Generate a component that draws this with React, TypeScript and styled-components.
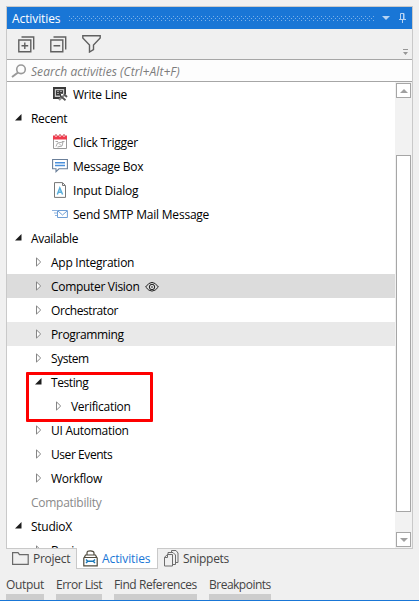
import React from 'react';
import styled, { createGlobalStyle } from 'styled-components';

const Global = createGlobalStyle`
  * { box-sizing: border-box; }
  body { margin: 0; background: #f0f0f0; font: 12px "Open Sans", "Noto Sans", sans-serif; color: #000; overflow: hidden; }
  svg { display: block; flex: none; }
`;

const Page = styled.div`
  width: 419px; height: 601px; display: flex; flex-direction: column;
  padding: 6px 5px 0 6px; background: #f0f0f0; border-bottom: 1px solid #1976d6;
`;
const Panel = styled.section`
  height: 543px; width: 407px; flex: none; display: flex; flex-direction: column;
  border: 1px solid #c9c9c9; background: #f0f0f0;
`;
const TitleBar = styled.header`
  height: 22px; flex: none; display: flex; align-items: center; background: #1976d6; color: #fff; padding: 0 6px 0 5px;
`;
const Grip = styled.div`
  width: 306px; height: 5px; margin: 1px 7px 0 auto;
  background-image: linear-gradient(90deg, #7db1e9 1px, transparent 1px), linear-gradient(90deg, #7db1e9 1px, transparent 1px), linear-gradient(90deg, #7db1e9 1px, transparent 1px);
  background-size: 4px 1px;
  background-position: 0 0, 2px 2px, 0 4px;
  background-repeat: repeat-x;
`;
const TitleActions = styled.div`display: flex; align-items: center; gap: 9px;`;
const Toolbar = styled.div`
  height: 31px; flex: none; display: flex; align-items: center; gap: 15px; padding: 0 4px 0 11px; border-bottom: 1px solid #a6a6a6;
`;
const Overflow = styled.div`margin-left: auto; align-self: flex-end; padding-bottom: 4px;`;
const Search = styled.div`
  height: 22px; flex: none; display: flex; align-items: center; gap: 4px; padding-left: 4px;
  background: #fdfdfd; border-bottom: 1px solid #a6a6a6; color: #7c7c7c; font-style: italic;
`;
const Content = styled.div`flex: 1; min-height: 0; display: flex; background: #fff;`;
const List = styled.div`flex: 1; overflow: hidden; position: relative;`;
const Row = styled.div<{ $indent: number; $bg?: string; $muted?: boolean }>`
  height: 24px; display: flex; align-items: center; padding-left: ${p => p.$indent}px;
  background: ${p => p.$bg || 'transparent'}; color: ${p => (p.$muted ? '#8a8a8a' : '#000')};
`;
const Slot = styled.span<{ $w: number; $lift?: boolean }>`
  width: ${p => p.$w}px; flex: none; display: flex; align-items: center; padding-bottom: ${p => (p.$lift ? 2 : 0)}px;
`;
const Label = styled.span<{ $ls?: number; $flush?: boolean }>`
  white-space: nowrap; line-height: 16px; letter-spacing: ${p => p.$ls ?? 0}px; padding-top: ${p => (p.$flush ? 0 : 2)}px;
`;
const Eye = styled.span`margin: 1px 0 0 5px;`;
const Highlight = styled.div`
  position: absolute; left: 19px; top: 290px; width: 127px; height: 50px; border: 3px solid #fe0000; border-radius: 1px;
`;
const Scroll = styled.div`
  width: 17px; display: flex; flex-direction: column; align-items: flex-start; padding: 1px; background: #f2f2f2;
`;
const ScrollButton = styled.div`
  width: 15px; height: 15px; flex: none; display: flex; align-items: center; justify-content: center; border: 1px solid #a6a6a6; background: #fff;
`;
const Track = styled.div`flex: 1; width: 15px; padding: 57px 0 20px;`;
const Thumb = styled.div`height: 100%; border: 1px solid #a6a6a6; background: #fff;`;
const Tabs = styled.nav`height: 21px; display: flex; color: #444; margin-top: -1px;`;
const Tab = styled.div<{ $w: number; $active?: boolean }>`
  width: ${p => p.$w}px; height: 21px; display: flex; align-items: center; gap: 4px; padding-left: 6px;
  ${p => p.$active && 'background: #fff; color: #1976d6; border: 1px solid #c9c9c9; border-top: 0;'}
`;
const Docks = styled.footer`display: flex; gap: 12px; margin-top: 7px; color: #444;`;
const Dock = styled.div<{ $w: number }>`
  width: ${p => p.$w}px; height: 24px; border-bottom: 6px solid #cdcdcd; line-height: 18px;
`;

const Arrow = ({ open }: { open?: boolean }) => open ? (
  <svg width="7" height="7" viewBox="0 0 7 7"><path d="M6.5 0V6.5H0Z" fill="#1c1c1c" /></svg>
) : (
  <svg width="7" height="10" viewBox="0 0 7 10"><path d="M1.5 .9V9.1L5.7 5Z" fill="#fff" stroke="#858585" /></svg>
);
const BoxIcon = ({ plus }: { plus?: boolean }) => (
  <svg width="17" height="17" viewBox="0 0 17 17" fill="none" stroke="#606060" strokeWidth="1.4">
    <path d="M3.5 1H15.7V13.5" /><path d="M.8 4H12.8V15.7H.8ZM3.5 9.8H10.2" />{plus && <path d="M6.8 6.5V13" />}
  </svg>
);
const Funnel = () => (
  <svg width="19" height="18" viewBox="0 0 19 18" fill="none" stroke="#606060" strokeWidth="1.4"><path d="M.8 .8H18.2V3L11.5 10V14.5L7.5 17V10L.8 3Z" /></svg>
);
const Tri = ({ up, color = '#a0a0a0' }: { up?: boolean; color?: string }) => (
  <svg width="8" height="4" viewBox="0 0 8 4"><path d={up ? 'M0 4L4 0L8 4Z' : 'M0 0H8L4 4Z'} fill={color} /></svg>
);
const Pin = () => (
  <svg width="7" height="10" viewBox="0 0 7 10" fill="none" stroke="#b5d3f3"><path d="M1.5 6V.5H5V6M0 6.5H7M3.5 7V10" /><path d="M4.5 1V6" /></svg>
);
const OverflowIcon = () => (
  <svg width="5" height="6" viewBox="0 0 5 6"><path d="M0 0H5V1H0ZM0 3H5L2.5 6Z" fill="#969696" /></svg>
);
const Folder = () => (
  <svg width="17" height="13" viewBox="0 0 17 13" fill="none" stroke="#6a6a6a" strokeWidth="1.2"><path d="M.6 .6H6L7.5 2.7H16.2V12.3H.6Z" /></svg>
);
const Bag = () => (
  <svg width="15" height="17" viewBox="0 0 15 17" fill="none" stroke="#4f4a3c" strokeWidth="1.2">
    <path d="M4 5V3Q4 .8 7.3 .8Q11 .8 11 3V5M2.5 5H12.5L13.7 7.5H1.3ZM.8 7.5V15.8H14.2V7.5" />
    <path d="M3 9.5L4.8 11.2L3 13M4.8 11.2H10.2M12 9.5L10.2 11.2L12 13" stroke="#1677b8" strokeWidth="1.4" />
  </svg>
);
const Pages = () => (
  <svg width="15" height="17" viewBox="0 0 15 17" fill="#f0f0f0" stroke="#6d6d6d">
    <path d="M7.5 .5H12L14 3V12.5H8Z" /><path d="M4 2.5H9L11.5 5V14.5H4Z" /><path d="M3.3 4.5H8.5V16H.5V7.3Z" /><path d="M.5 7.5H3.5V4.5" fill="none" />
  </svg>
);
const Glyph = ({ kind }: { kind: string }) => (
  <svg width="16" height="16" viewBox="0 0 16 16" fill="none">
    {kind === 'write' && <>
      <path d="M1 1H14V8H9V13H1Z" fill="#3a3a3a" />
      <path d="M2.8 3H12.2V8H8V11H2.8Z" fill="#c9c9c9" />
      <path d="M4 4.2H11V7.8H8V9.5H4Z" fill="#3a3a3a" />
      <path d="M5.5 5.5H6.5M8.5 5.5H9.5M5.5 7.5H6.5" stroke="#fff" />
      <path d="M7 14L13 8.5" stroke="#8a8a8a" strokeWidth="2.2" />
      <path d="M8.5 10L13.5 14.2M12 8L15 11" stroke="#555" strokeWidth="1.8" />
    </>}
    {kind === 'click' && <>
      <path d="M1.5 5V14.5H14.5V5" stroke="#999" /><path d="M1 1.5H15V5.5H1Z" fill="#ef3b4d" />
      <path d="M4 0V3M8 0V3M12 0V3" stroke="#fff" /><path d="M4 0V2M8 0V2M12 0V2" stroke="#b93641" />
      <path d="M3.5 7.5H6M10 7.5H12.5M4 12.5L5.5 9L11 8L10 12L5.5 13M7 9.5L9 11.5" stroke="#aaa" />
    </>}
    {kind === 'message' && <>
      <path d="M.6 1.5H15.4V10.8H7L4 13.7V10.8H.6Z" stroke="#6a7f99" strokeWidth="1.1" fill="#fff" /><path d="M3 4.7H13M3 7.5H13" stroke="#4a90dc" strokeWidth="1.4" />
    </>}
    {kind === 'input' && <>
      <path d="M2.5 .6H10.5L13.5 3.5V15.4H2.5Z" stroke="#777" fill="#fff" /><path d="M10.5 1V3.5H13" stroke="#777" />
      <path d="M5.3 12.5L7.8 6L10.6 12.5M6.2 10.3H9.7" stroke="#5aaedb" strokeWidth="1.5" />
    </>}
    {kind === 'mail' && <>
      <path d="M5.5 4.5H15.4V11.5H5.5ZM6 5L10.5 9L15 5" stroke="#6f9fd6" /><path d="M0 4.5H5M2 7H5M3 9.5H5" stroke="#8db2de" />
    </>}
  </svg>
);
const EyeIcon = () => (
  <svg width="14" height="12" viewBox="0 0 14 12" fill="none" stroke="#222" strokeWidth="1"><path d="M.6 6Q7-3.2 13.4 6Q7 14.2 .6 6Z" /><circle cx="7" cy="6" r="2.7" /><circle cx="7" cy="6" r=".8" fill="#222" stroke="none" /></svg>
);

type Item = { t: string; ls: number; kind?: string; open?: boolean; lvl: number; bg?: string; muted?: boolean };
const items: Item[] = [
  { t: 'Write Line', ls: -0.25, kind: 'write', lvl: 2 },
  { t: 'Recent', ls: -0.33, open: true, lvl: 0 },
  { t: 'Click Trigger', ls: -0.23, kind: 'click', lvl: 2 },
  { t: 'Message Box', ls: -0.27, kind: 'message', lvl: 2 },
  { t: 'Input Dialog', ls: -0.22, kind: 'input', lvl: 2 },
  { t: 'Send SMTP Mail Message', ls: -0.22, kind: 'mail', lvl: 2 },
  { t: 'Available', ls: -0.33, open: true, lvl: 0 },
  { t: 'App Integration', ls: -0.26, lvl: 1 },
  { t: 'Computer Vision', ls: -0.31, lvl: 1, bg: '#dcdcdc' },
  { t: 'Orchestrator', ls: -0.42, lvl: 1 },
  { t: 'Programming', ls: -0.36, lvl: 1, bg: '#e9e9e9' },
  { t: 'System', ls: -0.45, lvl: 1 },
  { t: 'Testing', ls: -0.4, open: true, lvl: 1 },
  { t: 'Verification', ls: -0.3, lvl: 2 },
  { t: 'UI Automation', ls: -0.28, lvl: 1 },
  { t: 'User Events', ls: -0.43, lvl: 1 },
  { t: 'Workflow', ls: -0.25, lvl: 1 },
  { t: 'Compatibility', ls: -0.27, lvl: 0, muted: true },
  { t: 'StudioX', ls: -0.28, open: true, lvl: 0 },
  { t: 'Basic', ls: 0, lvl: 1 },
];

export default function App() {
  return (
    <Page>
      <Global />
      <Panel>
        <TitleBar>
          <Label $ls={-0.1}>Activities</Label>
          <Grip />
          <TitleActions><Tri color="#b5d3f3" /><Pin /></TitleActions>
        </TitleBar>
        <Toolbar>
          <BoxIcon plus /><BoxIcon /><Funnel />
          <Overflow><OverflowIcon /></Overflow>
        </Toolbar>
        <Search>
          <svg width="16" height="14" viewBox="0 0 16 14" fill="none" stroke="#999" strokeWidth="1.6"><circle cx="10" cy="5.3" r="4.3" /><path d="M7 8.5L1 13" strokeWidth="2" /></svg>
          <Label $ls={0.06}>Search activities (Ctrl+Alt+F)</Label>
        </Search>
        <Content>
          <List>
            {items.map(i => (
              <Row key={i.t} $indent={i.kind ? 45 : 8 + i.lvl * 20} $bg={i.bg} $muted={i.muted}>
                <Slot $w={i.kind ? 21 : 16} $lift={i.open}>{i.kind ? <Glyph kind={i.kind} /> : !i.muted && <Arrow open={i.open} />}</Slot>
                <Label $ls={i.ls}>{i.t}</Label>
                {i.t === 'Computer Vision' && <Eye><EyeIcon /></Eye>}
              </Row>
            ))}
            <Highlight />
          </List>
          <Scroll>
            <ScrollButton><Tri up /></ScrollButton>
            <Track><Thumb /></Track>
            <ScrollButton><Tri /></ScrollButton>
          </Scroll>
        </Content>
      </Panel>
      <Tabs>
        <Tab $w={70}><Folder /><Label $ls={-0.28} $flush>Project</Label></Tab>
        <Tab $w={82} $active><Bag /><Label $ls={-0.1}>Activities</Label></Tab>
        <Tab $w={80}><Pages /><Label $ls={-0.3} $flush>Snippets</Label></Tab>
      </Tabs>
      <Docks>
        <Dock $w={38}><Label $ls={-0.33} $flush>Output</Label></Dock>
        <Dock $w={46}><Label $ls={-0.5} $flush>Error List</Label></Dock>
        <Dock $w={83}><Label $ls={-0.42} $flush>Find References</Label></Dock>
        <Dock $w={62}><Label $ls={-0.5} $flush>Breakpoints</Label></Dock>
      </Docks>
    </Page>
  );
}
